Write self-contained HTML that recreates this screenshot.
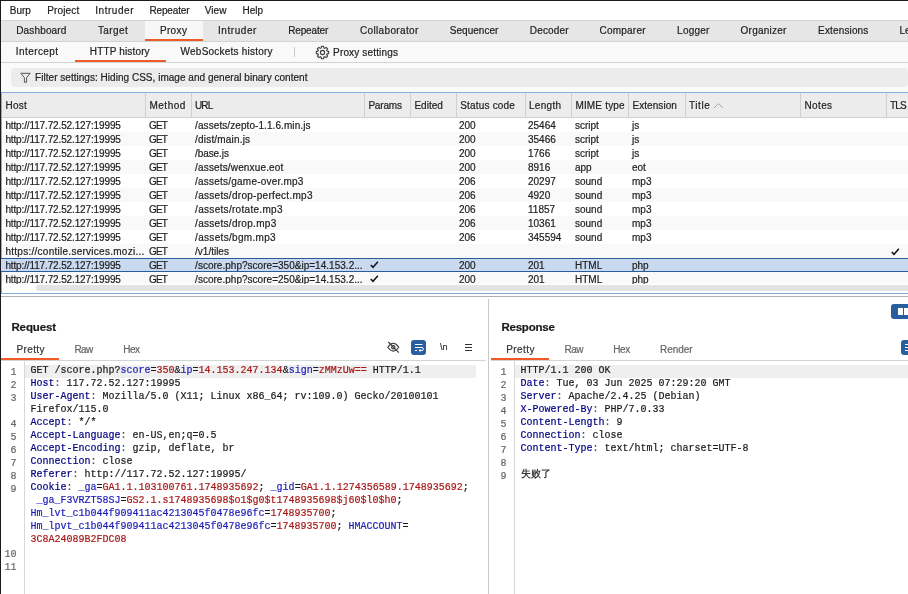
<!DOCTYPE html>
<html><head><meta charset="utf-8"><style>
html,body{margin:0;padding:0;width:908px;height:594px;overflow:hidden;background:#fff}
#wrap{position:absolute;left:0;top:0;width:908px;height:594px;will-change:transform}
#wrap>div,#wrap>svg{position:absolute}
.t{position:absolute;white-space:nowrap;font-family:'Liberation Sans',sans-serif;-webkit-text-stroke:0.2px currentColor}
</style></head><body><div id="wrap">
<div style="left:0px;top:0px;width:908px;height:594px;background:#ffffff;"></div>
<div style="left:0px;top:0px;width:908px;height:1px;background:#1b1b1f;"></div>
<div style="left:0px;top:0px;width:1px;height:594px;background:#1b1b1f;"></div>
<div class="t" style="left:9.8px;top:6px;font-size:10px;line-height:10px;color:#1e1e1e;font-weight:normal;font-family:'Liberation Sans',sans-serif;letter-spacing:0.000px;">Burp</div>
<div class="t" style="left:47.199999999999996px;top:6px;font-size:10px;line-height:10px;color:#1e1e1e;font-weight:normal;font-family:'Liberation Sans',sans-serif;letter-spacing:0.150px;">Project</div>
<div class="t" style="left:95.2px;top:6px;font-size:10px;line-height:10px;color:#1e1e1e;font-weight:normal;font-family:'Liberation Sans',sans-serif;letter-spacing:0.550px;">Intruder</div>
<div class="t" style="left:149.5px;top:6px;font-size:10px;line-height:10px;color:#1e1e1e;font-weight:normal;font-family:'Liberation Sans',sans-serif;letter-spacing:-0.164px;">Repeater</div>
<div class="t" style="left:204.70000000000002px;top:6px;font-size:10px;line-height:10px;color:#1e1e1e;font-weight:normal;font-family:'Liberation Sans',sans-serif;letter-spacing:0.100px;">View</div>
<div class="t" style="left:242.4px;top:6px;font-size:10px;line-height:10px;color:#1e1e1e;font-weight:normal;font-family:'Liberation Sans',sans-serif;letter-spacing:0.017px;">Help</div>
<div style="left:1px;top:20px;width:907px;height:1px;background:#d2d2d2;"></div>
<div style="left:1px;top:21px;width:907px;height:20px;background:#e6e6e6;"></div>
<div style="left:145px;top:21px;width:58px;height:18px;background:#f7f7f7;"></div>
<div style="left:145px;top:39px;width:58px;height:2px;background:#f05a28;"></div>
<div style="left:1px;top:41px;width:907px;height:1px;background:#cfd4d4;"></div>
<div class="t" style="left:16.15px;top:26px;font-size:10px;line-height:10px;color:#222;font-weight:normal;font-family:'Liberation Sans',sans-serif;letter-spacing:0.169px;">Dashboard</div>
<div class="t" style="left:97.9px;top:26px;font-size:10px;line-height:10px;color:#222;font-weight:normal;font-family:'Liberation Sans',sans-serif;letter-spacing:0.440px;">Target</div>
<div class="t" style="left:159.9px;top:26px;font-size:10px;line-height:10px;color:#222;font-weight:normal;font-family:'Liberation Sans',sans-serif;letter-spacing:0.362px;">Proxy</div>
<div class="t" style="left:217.9px;top:26px;font-size:10px;line-height:10px;color:#222;font-weight:normal;font-family:'Liberation Sans',sans-serif;letter-spacing:0.579px;">Intruder</div>
<div class="t" style="left:288.15px;top:26px;font-size:10px;line-height:10px;color:#222;font-weight:normal;font-family:'Liberation Sans',sans-serif;letter-spacing:-0.129px;">Repeater</div>
<div class="t" style="left:359.9px;top:26px;font-size:10px;line-height:10px;color:#222;font-weight:normal;font-family:'Liberation Sans',sans-serif;letter-spacing:0.364px;">Collaborator</div>
<div class="t" style="left:449.79999999999995px;top:26px;font-size:10px;line-height:10px;color:#222;font-weight:normal;font-family:'Liberation Sans',sans-serif;letter-spacing:0.031px;">Sequencer</div>
<div class="t" style="left:529.8px;top:26px;font-size:10px;line-height:10px;color:#222;font-weight:normal;font-family:'Liberation Sans',sans-serif;letter-spacing:0.167px;">Decoder</div>
<div class="t" style="left:599.5px;top:26px;font-size:10px;line-height:10px;color:#222;font-weight:normal;font-family:'Liberation Sans',sans-serif;letter-spacing:0.221px;">Comparer</div>
<div class="t" style="left:677.1px;top:26px;font-size:10px;line-height:10px;color:#222;font-weight:normal;font-family:'Liberation Sans',sans-serif;letter-spacing:0.230px;">Logger</div>
<div class="t" style="left:740.6px;top:26px;font-size:10px;line-height:10px;color:#222;font-weight:normal;font-family:'Liberation Sans',sans-serif;letter-spacing:0.237px;">Organizer</div>
<div class="t" style="left:818.1px;top:26px;font-size:10px;line-height:10px;color:#222;font-weight:normal;font-family:'Liberation Sans',sans-serif;letter-spacing:0.144px;">Extensions</div>
<div class="t" style="left:899.5px;top:26px;font-size:10px;line-height:10px;color:#222;font-weight:normal;font-family:'Liberation Sans',sans-serif;">Learn</div>
<div style="left:1px;top:42px;width:907px;height:20px;background:#f9f9f9;"></div>
<div style="left:75px;top:60px;width:91px;height:2px;background:#f05a28;"></div>
<div style="left:1px;top:62px;width:907px;height:1px;background:#cfd4d4;"></div>
<div class="t" style="left:15.8px;top:47px;font-size:10px;line-height:10px;color:#222;font-weight:normal;font-family:'Liberation Sans',sans-serif;letter-spacing:0.425px;">Intercept</div>
<div class="t" style="left:89.80000000000001px;top:47px;font-size:10px;line-height:10px;color:#222;font-weight:normal;font-family:'Liberation Sans',sans-serif;letter-spacing:0.150px;">HTTP history</div>
<div class="t" style="left:180.6px;top:47px;font-size:10px;line-height:10px;color:#222;font-weight:normal;font-family:'Liberation Sans',sans-serif;letter-spacing:0.218px;">WebSockets history</div>
<div style="left:294px;top:47px;width:1px;height:10px;background:#c8c8c8;"></div>
<svg style="position:absolute;left:314.5px;top:44.5px" width="15" height="15" viewBox="0 0 15 15"><path d="M6.13 3.01 L6.41 1.30 L8.59 1.30 L8.87 3.01 L9.71 3.35 L11.11 2.34 L12.66 3.89 L11.65 5.29 L11.99 6.13 L13.70 6.41 L13.70 8.59 L11.99 8.87 L11.65 9.71 L12.66 11.11 L11.11 12.66 L9.71 11.65 L8.87 11.99 L8.59 13.70 L6.41 13.70 L6.13 11.99 L5.29 11.65 L3.89 12.66 L2.34 11.11 L3.35 9.71 L3.01 8.87 L1.30 8.59 L1.30 6.41 L3.01 6.13 L3.35 5.29 L2.34 3.89 L3.89 2.34 L5.29 3.35 Z" fill="none" stroke="#3a3a3a" stroke-width="1.1" stroke-linejoin="round"/><circle cx="7.5" cy="7.5" r="2.1" fill="none" stroke="#3a3a3a" stroke-width="1.1"/></svg>
<div class="t" style="left:333.09999999999997px;top:48px;font-size:10px;line-height:10px;color:#222;font-weight:normal;font-family:'Liberation Sans',sans-serif;letter-spacing:0.154px;">Proxy settings</div>
<div style="left:1px;top:63px;width:907px;height:29px;background:#fafafa;"></div>
<div style="left:11px;top:68px;width:897px;height:19px;background:#ececec;border-radius:4px;"></div>
<svg style="position:absolute;left:20px;top:72px" width="11" height="11" viewBox="0 0 11 11"><path d="M0.8 1.3 H10.2 L6.6 5.6 V10.2 H4.4 V5.6 Z" fill="none" stroke="#555" stroke-width="1" stroke-linejoin="round"/></svg>
<div class="t" style="left:35.1px;top:73px;font-size:10px;line-height:10px;color:#222;font-weight:normal;font-family:'Liberation Sans',sans-serif;letter-spacing:0.028px;">Filter settings: Hiding CSS, image and general binary content</div>
<div style="left:1px;top:92px;width:907px;height:1px;background:#87aede;"></div>
<div style="left:1px;top:92px;width:1px;height:202px;background:#87aede;"></div>
<div style="left:2px;top:93px;width:906px;height:24px;background:#ececec;"></div>
<div style="left:2px;top:117px;width:906px;height:1px;background:#d0d0d0;"></div>
<div style="left:145px;top:93px;width:1px;height:24px;background:#d0d0d0;"></div>
<div style="left:191px;top:93px;width:1px;height:24px;background:#d0d0d0;"></div>
<div style="left:364px;top:93px;width:1px;height:24px;background:#d0d0d0;"></div>
<div style="left:410px;top:93px;width:1px;height:24px;background:#d0d0d0;"></div>
<div style="left:456px;top:93px;width:1px;height:24px;background:#d0d0d0;"></div>
<div style="left:525px;top:93px;width:1px;height:24px;background:#d0d0d0;"></div>
<div style="left:571px;top:93px;width:1px;height:24px;background:#d0d0d0;"></div>
<div style="left:628px;top:93px;width:1px;height:24px;background:#d0d0d0;"></div>
<div style="left:685px;top:93px;width:1px;height:24px;background:#d0d0d0;"></div>
<div style="left:800px;top:93px;width:1px;height:24px;background:#d0d0d0;"></div>
<div style="left:886px;top:93px;width:1px;height:24px;background:#d0d0d0;"></div>
<div class="t" style="left:5.4px;top:101px;font-size:10px;line-height:10px;color:#222;font-weight:normal;font-family:'Liberation Sans',sans-serif;letter-spacing:0.317px;">Host</div>
<div class="t" style="left:149.4px;top:101px;font-size:10px;line-height:10px;color:#222;font-weight:normal;font-family:'Liberation Sans',sans-serif;letter-spacing:0.530px;">Method</div>
<div class="t" style="left:194.9px;top:101px;font-size:10px;line-height:10px;color:#222;font-weight:normal;font-family:'Liberation Sans',sans-serif;letter-spacing:-0.750px;">URL</div>
<div class="t" style="left:368.4px;top:101px;font-size:10px;line-height:10px;color:#222;font-weight:normal;font-family:'Liberation Sans',sans-serif;letter-spacing:-0.190px;">Params</div>
<div class="t" style="left:414.4px;top:101px;font-size:10px;line-height:10px;color:#222;font-weight:normal;font-family:'Liberation Sans',sans-serif;letter-spacing:0.030px;">Edited</div>
<div class="t" style="left:460.15px;top:101px;font-size:10px;line-height:10px;color:#222;font-weight:normal;font-family:'Liberation Sans',sans-serif;letter-spacing:0.195px;">Status code</div>
<div class="t" style="left:528.9px;top:101px;font-size:10px;line-height:10px;color:#222;font-weight:normal;font-family:'Liberation Sans',sans-serif;letter-spacing:0.330px;">Length</div>
<div class="t" style="left:575.4px;top:101px;font-size:10px;line-height:10px;color:#222;font-weight:normal;font-family:'Liberation Sans',sans-serif;letter-spacing:0.181px;">MIME type</div>
<div class="t" style="left:632.4px;top:101px;font-size:10px;line-height:10px;color:#222;font-weight:normal;font-family:'Liberation Sans',sans-serif;letter-spacing:0.075px;">Extension</div>
<div class="t" style="left:688.9px;top:101px;font-size:10px;line-height:10px;color:#222;font-weight:normal;font-family:'Liberation Sans',sans-serif;letter-spacing:0.625px;">Title</div>
<div class="t" style="left:804.4px;top:101px;font-size:10px;line-height:10px;color:#222;font-weight:normal;font-family:'Liberation Sans',sans-serif;letter-spacing:0.400px;">Notes</div>
<div class="t" style="left:890.1px;top:101px;font-size:10px;line-height:10px;color:#222;font-weight:normal;font-family:'Liberation Sans',sans-serif;letter-spacing:-0.875px;">TLS</div>
<svg style="position:absolute;left:713px;top:102px" width="11" height="7" viewBox="0 0 11 7"><path d="M1 6 L5.5 1.5 L10 6" fill="none" stroke="#a8a8a8" stroke-width="1"/></svg>
<div class="t" style="left:5.4px;top:121px;font-size:10px;line-height:10px;color:#222;font-weight:normal;font-family:'Liberation Sans',sans-serif;letter-spacing:-0.132px;">http://117.72.52.127:19995</div>
<div class="t" style="left:149.1px;top:121px;font-size:10px;line-height:10px;color:#222;font-weight:normal;font-family:'Liberation Sans',sans-serif;letter-spacing:-0.875px;">GET</div>
<div class="t" style="left:195.1px;top:121px;font-size:10px;line-height:10px;color:#222;font-weight:normal;font-family:'Liberation Sans',sans-serif;letter-spacing:0.080px;">/assets/zepto-1.1.6.min.js</div>
<div class="t" style="left:459px;top:121px;font-size:10px;line-height:10px;color:#222;font-weight:normal;font-family:'Liberation Sans',sans-serif;">200</div>
<div class="t" style="left:528px;top:121px;font-size:10px;line-height:10px;color:#222;font-weight:normal;font-family:'Liberation Sans',sans-serif;">25464</div>
<div class="t" style="left:575px;top:121px;font-size:10px;line-height:10px;color:#222;font-weight:normal;font-family:'Liberation Sans',sans-serif;">script</div>
<div class="t" style="left:632px;top:121px;font-size:10px;line-height:10px;color:#222;font-weight:normal;font-family:'Liberation Sans',sans-serif;">js</div>
<div style="left:2px;top:132px;width:906px;height:14px;background:#f9f9f9;"></div>
<div class="t" style="left:5.4px;top:135px;font-size:10px;line-height:10px;color:#222;font-weight:normal;font-family:'Liberation Sans',sans-serif;letter-spacing:-0.132px;">http://117.72.52.127:19995</div>
<div class="t" style="left:149.1px;top:135px;font-size:10px;line-height:10px;color:#222;font-weight:normal;font-family:'Liberation Sans',sans-serif;letter-spacing:-0.875px;">GET</div>
<div class="t" style="left:195.1px;top:135px;font-size:10px;line-height:10px;color:#222;font-weight:normal;font-family:'Liberation Sans',sans-serif;letter-spacing:0.183px;">/dist/main.js</div>
<div class="t" style="left:459px;top:135px;font-size:10px;line-height:10px;color:#222;font-weight:normal;font-family:'Liberation Sans',sans-serif;">200</div>
<div class="t" style="left:528px;top:135px;font-size:10px;line-height:10px;color:#222;font-weight:normal;font-family:'Liberation Sans',sans-serif;">35466</div>
<div class="t" style="left:575px;top:135px;font-size:10px;line-height:10px;color:#222;font-weight:normal;font-family:'Liberation Sans',sans-serif;">script</div>
<div class="t" style="left:632px;top:135px;font-size:10px;line-height:10px;color:#222;font-weight:normal;font-family:'Liberation Sans',sans-serif;">js</div>
<div class="t" style="left:5.4px;top:149px;font-size:10px;line-height:10px;color:#222;font-weight:normal;font-family:'Liberation Sans',sans-serif;letter-spacing:-0.132px;">http://117.72.52.127:19995</div>
<div class="t" style="left:149.1px;top:149px;font-size:10px;line-height:10px;color:#222;font-weight:normal;font-family:'Liberation Sans',sans-serif;letter-spacing:-0.875px;">GET</div>
<div class="t" style="left:195.1px;top:149px;font-size:10px;line-height:10px;color:#222;font-weight:normal;font-family:'Liberation Sans',sans-serif;letter-spacing:-0.093px;">/base.js</div>
<div class="t" style="left:459px;top:149px;font-size:10px;line-height:10px;color:#222;font-weight:normal;font-family:'Liberation Sans',sans-serif;">200</div>
<div class="t" style="left:528px;top:149px;font-size:10px;line-height:10px;color:#222;font-weight:normal;font-family:'Liberation Sans',sans-serif;">1766</div>
<div class="t" style="left:575px;top:149px;font-size:10px;line-height:10px;color:#222;font-weight:normal;font-family:'Liberation Sans',sans-serif;">script</div>
<div class="t" style="left:632px;top:149px;font-size:10px;line-height:10px;color:#222;font-weight:normal;font-family:'Liberation Sans',sans-serif;">js</div>
<div style="left:2px;top:160px;width:906px;height:14px;background:#f9f9f9;"></div>
<div class="t" style="left:5.4px;top:163px;font-size:10px;line-height:10px;color:#222;font-weight:normal;font-family:'Liberation Sans',sans-serif;letter-spacing:-0.132px;">http://117.72.52.127:19995</div>
<div class="t" style="left:149.1px;top:163px;font-size:10px;line-height:10px;color:#222;font-weight:normal;font-family:'Liberation Sans',sans-serif;letter-spacing:-0.875px;">GET</div>
<div class="t" style="left:195.1px;top:163px;font-size:10px;line-height:10px;color:#222;font-weight:normal;font-family:'Liberation Sans',sans-serif;letter-spacing:0.153px;">/assets/wenxue.eot</div>
<div class="t" style="left:459px;top:163px;font-size:10px;line-height:10px;color:#222;font-weight:normal;font-family:'Liberation Sans',sans-serif;">200</div>
<div class="t" style="left:528px;top:163px;font-size:10px;line-height:10px;color:#222;font-weight:normal;font-family:'Liberation Sans',sans-serif;">8916</div>
<div class="t" style="left:575px;top:163px;font-size:10px;line-height:10px;color:#222;font-weight:normal;font-family:'Liberation Sans',sans-serif;">app</div>
<div class="t" style="left:632px;top:163px;font-size:10px;line-height:10px;color:#222;font-weight:normal;font-family:'Liberation Sans',sans-serif;">eot</div>
<div class="t" style="left:5.4px;top:177px;font-size:10px;line-height:10px;color:#222;font-weight:normal;font-family:'Liberation Sans',sans-serif;letter-spacing:-0.132px;">http://117.72.52.127:19995</div>
<div class="t" style="left:149.1px;top:177px;font-size:10px;line-height:10px;color:#222;font-weight:normal;font-family:'Liberation Sans',sans-serif;letter-spacing:-0.875px;">GET</div>
<div class="t" style="left:195.1px;top:177px;font-size:10px;line-height:10px;color:#222;font-weight:normal;font-family:'Liberation Sans',sans-serif;letter-spacing:0.218px;">/assets/game-over.mp3</div>
<div class="t" style="left:459px;top:177px;font-size:10px;line-height:10px;color:#222;font-weight:normal;font-family:'Liberation Sans',sans-serif;">206</div>
<div class="t" style="left:528px;top:177px;font-size:10px;line-height:10px;color:#222;font-weight:normal;font-family:'Liberation Sans',sans-serif;">20297</div>
<div class="t" style="left:575px;top:177px;font-size:10px;line-height:10px;color:#222;font-weight:normal;font-family:'Liberation Sans',sans-serif;">sound</div>
<div class="t" style="left:632px;top:177px;font-size:10px;line-height:10px;color:#222;font-weight:normal;font-family:'Liberation Sans',sans-serif;">mp3</div>
<div style="left:2px;top:188px;width:906px;height:14px;background:#f9f9f9;"></div>
<div class="t" style="left:5.4px;top:191px;font-size:10px;line-height:10px;color:#222;font-weight:normal;font-family:'Liberation Sans',sans-serif;letter-spacing:-0.132px;">http://117.72.52.127:19995</div>
<div class="t" style="left:149.1px;top:191px;font-size:10px;line-height:10px;color:#222;font-weight:normal;font-family:'Liberation Sans',sans-serif;letter-spacing:-0.875px;">GET</div>
<div class="t" style="left:195.1px;top:191px;font-size:10px;line-height:10px;color:#222;font-weight:normal;font-family:'Liberation Sans',sans-serif;letter-spacing:0.296px;">/assets/drop-perfect.mp3</div>
<div class="t" style="left:459px;top:191px;font-size:10px;line-height:10px;color:#222;font-weight:normal;font-family:'Liberation Sans',sans-serif;">206</div>
<div class="t" style="left:528px;top:191px;font-size:10px;line-height:10px;color:#222;font-weight:normal;font-family:'Liberation Sans',sans-serif;">4920</div>
<div class="t" style="left:575px;top:191px;font-size:10px;line-height:10px;color:#222;font-weight:normal;font-family:'Liberation Sans',sans-serif;">sound</div>
<div class="t" style="left:632px;top:191px;font-size:10px;line-height:10px;color:#222;font-weight:normal;font-family:'Liberation Sans',sans-serif;">mp3</div>
<div class="t" style="left:5.4px;top:205px;font-size:10px;line-height:10px;color:#222;font-weight:normal;font-family:'Liberation Sans',sans-serif;letter-spacing:-0.132px;">http://117.72.52.127:19995</div>
<div class="t" style="left:149.1px;top:205px;font-size:10px;line-height:10px;color:#222;font-weight:normal;font-family:'Liberation Sans',sans-serif;letter-spacing:-0.875px;">GET</div>
<div class="t" style="left:195.1px;top:205px;font-size:10px;line-height:10px;color:#222;font-weight:normal;font-family:'Liberation Sans',sans-serif;letter-spacing:0.303px;">/assets/rotate.mp3</div>
<div class="t" style="left:459px;top:205px;font-size:10px;line-height:10px;color:#222;font-weight:normal;font-family:'Liberation Sans',sans-serif;">206</div>
<div class="t" style="left:528px;top:205px;font-size:10px;line-height:10px;color:#222;font-weight:normal;font-family:'Liberation Sans',sans-serif;">11857</div>
<div class="t" style="left:575px;top:205px;font-size:10px;line-height:10px;color:#222;font-weight:normal;font-family:'Liberation Sans',sans-serif;">sound</div>
<div class="t" style="left:632px;top:205px;font-size:10px;line-height:10px;color:#222;font-weight:normal;font-family:'Liberation Sans',sans-serif;">mp3</div>
<div style="left:2px;top:216px;width:906px;height:14px;background:#f9f9f9;"></div>
<div class="t" style="left:5.4px;top:219px;font-size:10px;line-height:10px;color:#222;font-weight:normal;font-family:'Liberation Sans',sans-serif;letter-spacing:-0.132px;">http://117.72.52.127:19995</div>
<div class="t" style="left:149.1px;top:219px;font-size:10px;line-height:10px;color:#222;font-weight:normal;font-family:'Liberation Sans',sans-serif;letter-spacing:-0.875px;">GET</div>
<div class="t" style="left:195.1px;top:219px;font-size:10px;line-height:10px;color:#222;font-weight:normal;font-family:'Liberation Sans',sans-serif;letter-spacing:0.293px;">/assets/drop.mp3</div>
<div class="t" style="left:459px;top:219px;font-size:10px;line-height:10px;color:#222;font-weight:normal;font-family:'Liberation Sans',sans-serif;">206</div>
<div class="t" style="left:528px;top:219px;font-size:10px;line-height:10px;color:#222;font-weight:normal;font-family:'Liberation Sans',sans-serif;">10361</div>
<div class="t" style="left:575px;top:219px;font-size:10px;line-height:10px;color:#222;font-weight:normal;font-family:'Liberation Sans',sans-serif;">sound</div>
<div class="t" style="left:632px;top:219px;font-size:10px;line-height:10px;color:#222;font-weight:normal;font-family:'Liberation Sans',sans-serif;">mp3</div>
<div class="t" style="left:5.4px;top:233px;font-size:10px;line-height:10px;color:#222;font-weight:normal;font-family:'Liberation Sans',sans-serif;letter-spacing:-0.132px;">http://117.72.52.127:19995</div>
<div class="t" style="left:149.1px;top:233px;font-size:10px;line-height:10px;color:#222;font-weight:normal;font-family:'Liberation Sans',sans-serif;letter-spacing:-0.875px;">GET</div>
<div class="t" style="left:195.1px;top:233px;font-size:10px;line-height:10px;color:#222;font-weight:normal;font-family:'Liberation Sans',sans-serif;letter-spacing:0.311px;">/assets/bgm.mp3</div>
<div class="t" style="left:459px;top:233px;font-size:10px;line-height:10px;color:#222;font-weight:normal;font-family:'Liberation Sans',sans-serif;">206</div>
<div class="t" style="left:528px;top:233px;font-size:10px;line-height:10px;color:#222;font-weight:normal;font-family:'Liberation Sans',sans-serif;">345594</div>
<div class="t" style="left:575px;top:233px;font-size:10px;line-height:10px;color:#222;font-weight:normal;font-family:'Liberation Sans',sans-serif;">sound</div>
<div class="t" style="left:632px;top:233px;font-size:10px;line-height:10px;color:#222;font-weight:normal;font-family:'Liberation Sans',sans-serif;">mp3</div>
<div style="left:2px;top:244px;width:906px;height:14px;background:#f9f9f9;"></div>
<div class="t" style="left:5.4px;top:247px;font-size:10px;line-height:10px;color:#222;font-weight:normal;font-family:'Liberation Sans',sans-serif;letter-spacing:0.268px;">https://contile.services.mozi...</div>
<div class="t" style="left:149.1px;top:247px;font-size:10px;line-height:10px;color:#222;font-weight:normal;font-family:'Liberation Sans',sans-serif;letter-spacing:-0.875px;">GET</div>
<div class="t" style="left:195.1px;top:247px;font-size:10px;line-height:10px;color:#222;font-weight:normal;font-family:'Liberation Sans',sans-serif;letter-spacing:-0.012px;">/v1/tiles</div>
<div class="t" style="left:459px;top:247px;font-size:10px;line-height:10px;color:#222;font-weight:normal;font-family:'Liberation Sans',sans-serif;"></div>
<div class="t" style="left:528px;top:247px;font-size:10px;line-height:10px;color:#222;font-weight:normal;font-family:'Liberation Sans',sans-serif;"></div>
<div class="t" style="left:575px;top:247px;font-size:10px;line-height:10px;color:#222;font-weight:normal;font-family:'Liberation Sans',sans-serif;"></div>
<div class="t" style="left:632px;top:247px;font-size:10px;line-height:10px;color:#222;font-weight:normal;font-family:'Liberation Sans',sans-serif;"></div>
<div style="left:891px;top:248px;width:9px;height:8px"><svg style="display:block" width="9" height="8" viewBox="0 0 9 8"><path d="M0.8 3.9 L3.0 6.3 L7.9 0.8" fill="none" stroke="#111" stroke-width="1.45"/></svg></div>
<div style="left:1px;top:258px;width:907px;height:14px;background:#c8d9f0;"></div>
<div style="left:1px;top:258px;width:907px;height:1px;background:#2a5b9a;"></div>
<div style="left:1px;top:271px;width:907px;height:1px;background:#2a5b9a;"></div>
<div class="t" style="left:5.4px;top:261px;font-size:10px;line-height:10px;color:#222;font-weight:normal;font-family:'Liberation Sans',sans-serif;letter-spacing:-0.132px;">http://117.72.52.127:19995</div>
<div class="t" style="left:149.1px;top:261px;font-size:10px;line-height:10px;color:#222;font-weight:normal;font-family:'Liberation Sans',sans-serif;letter-spacing:-0.875px;">GET</div>
<div class="t" style="left:195.1px;top:261px;font-size:10px;line-height:10px;color:#222;font-weight:normal;font-family:'Liberation Sans',sans-serif;letter-spacing:0.021px;">/score.php?score=350&amp;ip=14.153.2...</div>
<div style="left:370px;top:261px;width:9px;height:8px"><svg style="display:block" width="9" height="8" viewBox="0 0 9 8"><path d="M0.8 3.9 L3.0 6.3 L7.9 0.8" fill="none" stroke="#111" stroke-width="1.45"/></svg></div>
<div class="t" style="left:459px;top:261px;font-size:10px;line-height:10px;color:#222;font-weight:normal;font-family:'Liberation Sans',sans-serif;">200</div>
<div class="t" style="left:528px;top:261px;font-size:10px;line-height:10px;color:#222;font-weight:normal;font-family:'Liberation Sans',sans-serif;">201</div>
<div class="t" style="left:575px;top:261px;font-size:10px;line-height:10px;color:#222;font-weight:normal;font-family:'Liberation Sans',sans-serif;">HTML</div>
<div class="t" style="left:632px;top:261px;font-size:10px;line-height:10px;color:#222;font-weight:normal;font-family:'Liberation Sans',sans-serif;">php</div>
<div style="left:2px;top:272px;width:906px;height:14px;background:#f9f9f9;"></div>
<div class="t" style="left:5.4px;top:275px;font-size:10px;line-height:10px;color:#222;font-weight:normal;font-family:'Liberation Sans',sans-serif;letter-spacing:-0.132px;">http://117.72.52.127:19995</div>
<div class="t" style="left:149.1px;top:275px;font-size:10px;line-height:10px;color:#222;font-weight:normal;font-family:'Liberation Sans',sans-serif;letter-spacing:-0.875px;">GET</div>
<div class="t" style="left:195.1px;top:275px;font-size:10px;line-height:10px;color:#222;font-weight:normal;font-family:'Liberation Sans',sans-serif;letter-spacing:0.021px;">/score.php?score=250&amp;ip=14.153.2...</div>
<div style="left:370px;top:275px;width:9px;height:8px"><svg style="display:block" width="9" height="8" viewBox="0 0 9 8"><path d="M0.8 3.9 L3.0 6.3 L7.9 0.8" fill="none" stroke="#111" stroke-width="1.45"/></svg></div>
<div class="t" style="left:459px;top:275px;font-size:10px;line-height:10px;color:#222;font-weight:normal;font-family:'Liberation Sans',sans-serif;">200</div>
<div class="t" style="left:528px;top:275px;font-size:10px;line-height:10px;color:#222;font-weight:normal;font-family:'Liberation Sans',sans-serif;">201</div>
<div class="t" style="left:575px;top:275px;font-size:10px;line-height:10px;color:#222;font-weight:normal;font-family:'Liberation Sans',sans-serif;">HTML</div>
<div class="t" style="left:632px;top:275px;font-size:10px;line-height:10px;color:#222;font-weight:normal;font-family:'Liberation Sans',sans-serif;">php</div>
<div style="left:2px;top:284px;width:906px;height:9px;background:#ffffff;"></div>
<div style="left:36px;top:285px;width:880px;height:6px;background:#e3e3e3;border-radius:3px;"></div>
<div style="left:1px;top:293px;width:907px;height:1px;background:#87aede;"></div>
<div style="left:1px;top:296px;width:907px;height:1px;background:#b4aeac;"></div>
<div style="left:488px;top:299px;width:1px;height:295px;background:#c8c8c8;"></div>
<div class="t" style="left:11.4px;top:322px;font-size:11.5px;line-height:11.5px;color:#1a1a1a;font-weight:bold;font-family:'Liberation Sans',sans-serif;letter-spacing:-0.108px;">Request</div>
<div class="t" style="left:501.4px;top:322px;font-size:11.5px;line-height:11.5px;color:#1a1a1a;font-weight:bold;font-family:'Liberation Sans',sans-serif;letter-spacing:-0.207px;">Response</div>
<div class="t" style="left:16.599999999999998px;top:345px;font-size:10px;line-height:10px;color:#333;font-weight:normal;font-family:'Liberation Sans',sans-serif;letter-spacing:0.340px;">Pretty</div>
<div class="t" style="left:74.4px;top:345px;font-size:10px;line-height:10px;color:#666;font-weight:normal;font-family:'Liberation Sans',sans-serif;letter-spacing:-0.525px;">Raw</div>
<div class="t" style="left:123.2px;top:345px;font-size:10px;line-height:10px;color:#666;font-weight:normal;font-family:'Liberation Sans',sans-serif;letter-spacing:-0.450px;">Hex</div>
<div class="t" style="left:506.2px;top:345px;font-size:10px;line-height:10px;color:#333;font-weight:normal;font-family:'Liberation Sans',sans-serif;letter-spacing:0.420px;">Pretty</div>
<div class="t" style="left:564.4px;top:345px;font-size:10px;line-height:10px;color:#666;font-weight:normal;font-family:'Liberation Sans',sans-serif;letter-spacing:-0.475px;">Raw</div>
<div class="t" style="left:613.3px;top:345px;font-size:10px;line-height:10px;color:#666;font-weight:normal;font-family:'Liberation Sans',sans-serif;letter-spacing:-0.400px;">Hex</div>
<div class="t" style="left:660.1px;top:345px;font-size:10px;line-height:10px;color:#666;font-weight:normal;font-family:'Liberation Sans',sans-serif;letter-spacing:-0.060px;">Render</div>
<div style="left:1px;top:358px;width:58px;height:2px;background:#f05a28;"></div>
<div style="left:491px;top:358px;width:58px;height:2px;background:#f05a28;"></div>
<div style="left:1px;top:360px;width:485px;height:1px;background:#d0d6d6;"></div>
<div style="left:491px;top:360px;width:417px;height:1px;background:#d0d6d6;"></div>
<svg style="position:absolute;left:386px;top:340px" width="15" height="14" viewBox="0 0 15 14"><path d="M1.8 7.2 Q7.3 -0.6 12.8 7.2 Q7.3 15 1.8 7.2 Z" fill="none" stroke="#3a3a3a" stroke-width="1.1"/><circle cx="7.3" cy="7.2" r="1.7" fill="none" stroke="#3a3a3a" stroke-width="1.1"/><path d="M2.3 2 L12.8 12.6" stroke="#3a3a3a" stroke-width="1.1"/></svg>
<div style="left:411px;top:340px;width:15px;height:15px;background:#2a5f9f;border-radius:3px"></div>
<svg style="position:absolute;left:411px;top:340px" width="15" height="15" viewBox="0 0 15 15"><path d="M4 4.5 H11.5 M4 7.5 H11 Q12.3 7.5 12.3 9 Q12.3 10.5 11 10.5 H8.5 M4 10.5 H6" fill="none" stroke="#f4f6fa" stroke-width="1"/><path d="M9.5 9.2 L8.2 10.5 L9.5 11.8" fill="none" stroke="#fff" stroke-width="1"/></svg>
<div class="t" style="left:440px;top:343px;font-size:9px;line-height:9px;color:#333;font-weight:normal;font-family:'Liberation Sans',sans-serif;">\n</div>
<svg style="position:absolute;left:465px;top:343px" width="8" height="9" viewBox="0 0 8 9"><path d="M0 1.5 H7 M0 4.5 H7 M0 7.5 H7" stroke="#333" stroke-width="1.2"/></svg>
<div style="left:891px;top:304px;width:24px;height:15px;background:#2a5f9f;border-radius:3px"></div>
<div style="left:898px;top:308px;width:5px;height:7px;background:#ffffff;"></div>
<div style="left:904px;top:308px;width:5px;height:7px;background:#ffffff;"></div>
<div style="left:901px;top:340px;width:15px;height:15px;background:#2a5f9f;border-radius:3px"></div>
<div style="left:905px;top:344px;width:4px;height:1px;background:#ffffff;"></div>
<div style="left:905px;top:347px;width:4px;height:1px;background:#ffffff;"></div>
<div style="left:905px;top:350px;width:4px;height:1px;background:#ffffff;"></div>
<div style="left:24px;top:361px;width:1px;height:233px;background:#d8d8d8;"></div>
<div style="left:514px;top:361px;width:1px;height:233px;background:#d8d8d8;"></div>
<div style="left:25px;top:365px;width:451px;height:13px;background:#efefef;"></div>
<div style="left:515px;top:365px;width:393px;height:13px;background:#efefef;"></div>
<div class="t" style="left:-13.5px;width:30px;text-align:right;top:368px;font-size:10px;line-height:10px;font-family:'Liberation Mono',monospace;color:#666">1</div>
<div class="t" style="left:30.5px;top:366px;font-size:10px;line-height:10px;color:#1a1a1a;font-weight:normal;font-family:'Liberation Mono',monospace;white-space:pre;"><span style="color:#1a1a1a">GET /score.php?</span><span style="color:#1c1cb8">score</span><span style="color:#1a1a1a">=</span><span style="color:#a81818">350</span><span style="color:#1a1a1a">&amp;</span><span style="color:#1c1cb8">ip</span><span style="color:#1a1a1a">=</span><span style="color:#a81818">14.153.247.134</span><span style="color:#1a1a1a">&amp;</span><span style="color:#1c1cb8">sign</span><span style="color:#1a1a1a">=</span><span style="color:#a81818">zMMzUw==</span><span style="color:#1a1a1a"> HTTP/1.1</span></div>
<div class="t" style="left:-13.5px;width:30px;text-align:right;top:381px;font-size:10px;line-height:10px;font-family:'Liberation Mono',monospace;color:#666">2</div>
<div class="t" style="left:30.5px;top:379px;font-size:10px;line-height:10px;color:#1a1a1a;font-weight:normal;font-family:'Liberation Mono',monospace;white-space:pre;"><span style="color:#000080">Host</span><span style="color:#555">: </span><span style="color:#1a1a1a">117.72.52.127:19995</span></div>
<div class="t" style="left:-13.5px;width:30px;text-align:right;top:394px;font-size:10px;line-height:10px;font-family:'Liberation Mono',monospace;color:#666">3</div>
<div class="t" style="left:30.5px;top:392px;font-size:10px;line-height:10px;color:#1a1a1a;font-weight:normal;font-family:'Liberation Mono',monospace;white-space:pre;"><span style="color:#000080">User-Agent</span><span style="color:#555">: </span><span style="color:#1a1a1a">Mozilla/5.0 (X11; Linux x86_64; rv:109.0) Gecko/20100101</span></div>
<div class="t" style="left:30.5px;top:405px;font-size:10px;line-height:10px;color:#1a1a1a;font-weight:normal;font-family:'Liberation Mono',monospace;white-space:pre;"><span style="color:#1a1a1a">Firefox/115.0</span></div>
<div class="t" style="left:-13.5px;width:30px;text-align:right;top:420px;font-size:10px;line-height:10px;font-family:'Liberation Mono',monospace;color:#666">4</div>
<div class="t" style="left:30.5px;top:418px;font-size:10px;line-height:10px;color:#1a1a1a;font-weight:normal;font-family:'Liberation Mono',monospace;white-space:pre;"><span style="color:#000080">Accept</span><span style="color:#555">: </span><span style="color:#1a1a1a">*/*</span></div>
<div class="t" style="left:-13.5px;width:30px;text-align:right;top:433px;font-size:10px;line-height:10px;font-family:'Liberation Mono',monospace;color:#666">5</div>
<div class="t" style="left:30.5px;top:431px;font-size:10px;line-height:10px;color:#1a1a1a;font-weight:normal;font-family:'Liberation Mono',monospace;white-space:pre;"><span style="color:#000080">Accept-Language</span><span style="color:#555">: </span><span style="color:#1a1a1a">en-US,en;q=0.5</span></div>
<div class="t" style="left:-13.5px;width:30px;text-align:right;top:446px;font-size:10px;line-height:10px;font-family:'Liberation Mono',monospace;color:#666">6</div>
<div class="t" style="left:30.5px;top:444px;font-size:10px;line-height:10px;color:#1a1a1a;font-weight:normal;font-family:'Liberation Mono',monospace;white-space:pre;"><span style="color:#000080">Accept-Encoding</span><span style="color:#555">: </span><span style="color:#1a1a1a">gzip, deflate, br</span></div>
<div class="t" style="left:-13.5px;width:30px;text-align:right;top:459px;font-size:10px;line-height:10px;font-family:'Liberation Mono',monospace;color:#666">7</div>
<div class="t" style="left:30.5px;top:457px;font-size:10px;line-height:10px;color:#1a1a1a;font-weight:normal;font-family:'Liberation Mono',monospace;white-space:pre;"><span style="color:#000080">Connection</span><span style="color:#555">: </span><span style="color:#1a1a1a">close</span></div>
<div class="t" style="left:-13.5px;width:30px;text-align:right;top:472px;font-size:10px;line-height:10px;font-family:'Liberation Mono',monospace;color:#666">8</div>
<div class="t" style="left:30.5px;top:470px;font-size:10px;line-height:10px;color:#1a1a1a;font-weight:normal;font-family:'Liberation Mono',monospace;white-space:pre;"><span style="color:#000080">Referer</span><span style="color:#555">: </span><span style="color:#1a1a1a">http://117.72.52.127:19995/</span></div>
<div class="t" style="left:-13.5px;width:30px;text-align:right;top:485px;font-size:10px;line-height:10px;font-family:'Liberation Mono',monospace;color:#666">9</div>
<div class="t" style="left:30.5px;top:483px;font-size:10px;line-height:10px;color:#1a1a1a;font-weight:normal;font-family:'Liberation Mono',monospace;white-space:pre;"><span style="color:#000080">Cookie</span><span style="color:#555">: </span><span style="color:#1c1cb8">_ga</span><span style="color:#1a1a1a">=</span><span style="color:#a81818">GA1.1.103100761.1748935692</span><span style="color:#1a1a1a">; </span><span style="color:#1c1cb8">_gid</span><span style="color:#1a1a1a">=</span><span style="color:#a81818">GA1.1.1274356589.1748935692</span><span style="color:#1a1a1a">;</span></div>
<div class="t" style="left:30.5px;top:496px;font-size:10px;line-height:10px;color:#1a1a1a;font-weight:normal;font-family:'Liberation Mono',monospace;white-space:pre;"><span style="color:#1c1cb8"> _ga_F3VRZT58SJ</span><span style="color:#1a1a1a">=</span><span style="color:#a81818">GS2.1.s1748935698$o1$g0$t1748935698$j60$l0$h0</span><span style="color:#1a1a1a">;</span></div>
<div class="t" style="left:30.5px;top:509px;font-size:10px;line-height:10px;color:#1a1a1a;font-weight:normal;font-family:'Liberation Mono',monospace;white-space:pre;"><span style="color:#1c1cb8">Hm_lvt_c1b044f909411ac4213045f0478e96fc</span><span style="color:#1a1a1a">=</span><span style="color:#a81818">1748935700</span><span style="color:#1a1a1a">;</span></div>
<div class="t" style="left:30.5px;top:522px;font-size:10px;line-height:10px;color:#1a1a1a;font-weight:normal;font-family:'Liberation Mono',monospace;white-space:pre;"><span style="color:#1c1cb8">Hm_lpvt_c1b044f909411ac4213045f0478e96fc</span><span style="color:#1a1a1a">=</span><span style="color:#a81818">1748935700</span><span style="color:#1a1a1a">; </span><span style="color:#1c1cb8">HMACCOUNT</span><span style="color:#1a1a1a">=</span></div>
<div class="t" style="left:30.5px;top:535px;font-size:10px;line-height:10px;color:#1a1a1a;font-weight:normal;font-family:'Liberation Mono',monospace;white-space:pre;"><span style="color:#a81818">3C8A24089B2FDC08</span></div>
<div class="t" style="left:-13.5px;width:30px;text-align:right;top:550px;font-size:10px;line-height:10px;font-family:'Liberation Mono',monospace;color:#666">10</div>
<div class="t" style="left:-13.5px;width:30px;text-align:right;top:563px;font-size:10px;line-height:10px;font-family:'Liberation Mono',monospace;color:#666">11</div>
<div class="t" style="left:476.5px;width:30px;text-align:right;top:368px;font-size:10px;line-height:10px;font-family:'Liberation Mono',monospace;color:#666">1</div>
<div class="t" style="left:520.5px;top:366px;font-size:10px;line-height:10px;color:#1a1a1a;font-weight:normal;font-family:'Liberation Mono',monospace;white-space:pre;"><span style="color:#1a1a1a">HTTP/1.1 200 OK</span></div>
<div class="t" style="left:476.5px;width:30px;text-align:right;top:381px;font-size:10px;line-height:10px;font-family:'Liberation Mono',monospace;color:#666">2</div>
<div class="t" style="left:520.5px;top:379px;font-size:10px;line-height:10px;color:#1a1a1a;font-weight:normal;font-family:'Liberation Mono',monospace;white-space:pre;"><span style="color:#000080">Date</span><span style="color:#555">: </span><span style="color:#1a1a1a">Tue, 03 Jun 2025 07:29:20 GMT</span></div>
<div class="t" style="left:476.5px;width:30px;text-align:right;top:394px;font-size:10px;line-height:10px;font-family:'Liberation Mono',monospace;color:#666">3</div>
<div class="t" style="left:520.5px;top:392px;font-size:10px;line-height:10px;color:#1a1a1a;font-weight:normal;font-family:'Liberation Mono',monospace;white-space:pre;"><span style="color:#000080">Server</span><span style="color:#555">: </span><span style="color:#1a1a1a">Apache/2.4.25 (Debian)</span></div>
<div class="t" style="left:476.5px;width:30px;text-align:right;top:407px;font-size:10px;line-height:10px;font-family:'Liberation Mono',monospace;color:#666">4</div>
<div class="t" style="left:520.5px;top:405px;font-size:10px;line-height:10px;color:#1a1a1a;font-weight:normal;font-family:'Liberation Mono',monospace;white-space:pre;"><span style="color:#000080">X-Powered-By</span><span style="color:#555">: </span><span style="color:#1a1a1a">PHP/7.0.33</span></div>
<div class="t" style="left:476.5px;width:30px;text-align:right;top:420px;font-size:10px;line-height:10px;font-family:'Liberation Mono',monospace;color:#666">5</div>
<div class="t" style="left:520.5px;top:418px;font-size:10px;line-height:10px;color:#1a1a1a;font-weight:normal;font-family:'Liberation Mono',monospace;white-space:pre;"><span style="color:#000080">Content-Length</span><span style="color:#555">: </span><span style="color:#1a1a1a">9</span></div>
<div class="t" style="left:476.5px;width:30px;text-align:right;top:433px;font-size:10px;line-height:10px;font-family:'Liberation Mono',monospace;color:#666">6</div>
<div class="t" style="left:520.5px;top:431px;font-size:10px;line-height:10px;color:#1a1a1a;font-weight:normal;font-family:'Liberation Mono',monospace;white-space:pre;"><span style="color:#000080">Connection</span><span style="color:#555">: </span><span style="color:#1a1a1a">close</span></div>
<div class="t" style="left:476.5px;width:30px;text-align:right;top:446px;font-size:10px;line-height:10px;font-family:'Liberation Mono',monospace;color:#666">7</div>
<div class="t" style="left:520.5px;top:444px;font-size:10px;line-height:10px;color:#1a1a1a;font-weight:normal;font-family:'Liberation Mono',monospace;white-space:pre;"><span style="color:#000080">Content-Type</span><span style="color:#555">: </span><span style="color:#1a1a1a">text/html; charset=UTF-8</span></div>
<div class="t" style="left:476.5px;width:30px;text-align:right;top:459px;font-size:10px;line-height:10px;font-family:'Liberation Mono',monospace;color:#666">8</div>
<div class="t" style="left:476.5px;width:30px;text-align:right;top:472px;font-size:10px;line-height:10px;font-family:'Liberation Mono',monospace;color:#666">9</div>
<div class="t" style="left:520.5px;top:470px;font-size:10px;line-height:10px;color:#1a1a1a;font-weight:normal;font-family:'Liberation Mono',monospace;white-space:pre;"><span style="color:#1a1a1a">失败了</span></div>
</div></body></html>
